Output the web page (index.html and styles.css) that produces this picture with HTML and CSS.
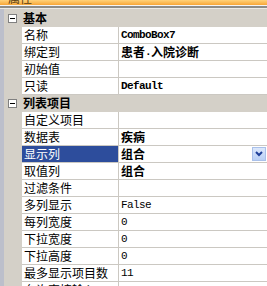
FILE: index.html
```html
<!doctype html>
<html>
<head>
  <title>属性</title>
  <link rel="stylesheet" href="styles.css">
</head>
<body>
  <header class="titlebar"><span>属性</span></header>
  <div class="edge"></div>

  <div class="grid">
    <div class="cat"><span class="toggle"></span>基本</div>
    <div class="row"><div class="gutter"></div><div class="name">名称</div><div class="value bold mono">ComboBox7</div></div>
    <div class="row"><div class="gutter"></div><div class="name">绑定到</div><div class="value bold">患者<span class="mono">.</span>入院诊断</div></div>
    <div class="row"><div class="gutter"></div><div class="name">初始值</div><div class="value"></div></div>
    <div class="row"><div class="gutter"></div><div class="name">只读</div><div class="value bold mono">Default</div></div>

    <div class="cat"><span class="toggle"></span>列表项目</div>
    <div class="row"><div class="gutter"></div><div class="name">自定义项目</div><div class="value"></div></div>
    <div class="row"><div class="gutter"></div><div class="name">数据表</div><div class="value bold">疾病</div></div>
    <div class="row selected">
      <div class="gutter"></div><div class="name">显示列</div>
      <div class="value bold">组合
        <span class="drop"><svg width="8" height="6" viewBox="0 0 8 6"><path d="M1 1 L4 4 L7 1" fill="none" stroke="#1f3f99" stroke-width="2"/></svg></span>
      </div>
    </div>
    <div class="row"><div class="gutter"></div><div class="name">取值列</div><div class="value bold">组合</div></div>
    <div class="row"><div class="gutter"></div><div class="name">过滤条件</div><div class="value"></div></div>
    <div class="row"><div class="gutter"></div><div class="name">多列显示</div><div class="value mono">False</div></div>
    <div class="row"><div class="gutter"></div><div class="name">每列宽度</div><div class="value mono">0</div></div>
    <div class="row"><div class="gutter"></div><div class="name">下拉宽度</div><div class="value mono">0</div></div>
    <div class="row"><div class="gutter"></div><div class="name">下拉高度</div><div class="value mono">0</div></div>
    <div class="row"><div class="gutter"></div><div class="name">最多显示项目数</div><div class="value mono">11</div></div>
    <div class="row"><div class="gutter"></div><div class="name">允许直接输入</div><div class="value mono">True</div></div>
  </div>
</body>
</html>
```
FILE: styles.css
```css
body {
  background: #d4d0c8;
  color: #000;
  font-family: "Noto Sans CJK SC", "Liberation Sans", sans-serif;
  font-size: 12px;
  height: 286px;
  margin: 0;
  overflow: hidden;
  position: relative;
}

.titlebar {
  background: linear-gradient(#ffd27a, #f7a637);
  border-bottom: 1px solid #f4f4f4;
  box-shadow: 0 2px 0 #8c8c88, 0 3px 0 #ecebe6;
  height: 5px;
  overflow: hidden;
  padding-left: 8px;
}

.titlebar span {
  color: #5a3c10;
  display: block;
  line-height: 12px;
  margin-top: -8px;
}

.grid {
  margin-top: 4px;
}

.cat {
  align-items: center;
  border-bottom: 1px solid #d4d0c8;
  display: flex;
  font-weight: bold;
  height: 16px;
  line-height: 16px;
}

.toggle {
  background: #fff;
  border: 1px solid #808080;
  box-sizing: border-box;
  height: 9px;
  margin: 0 6px 0 8px;
  position: relative;
  width: 9px;
}

.toggle::after {
  background: #000;
  content: "";
  height: 1px;
  left: 1px;
  position: absolute;
  top: 3px;
  width: 5px;
}

.row {
  display: flex;
  height: 17px;
  line-height: 16px;
}

.gutter {
  width: 22px;
  flex: none;
}

.name {
  background: #fff;
  border-bottom: 1px solid #cbc8c2;
  border-right: 1px solid #cbc8c2;
  flex: none;
  overflow: hidden;
  padding-left: 2px;
  white-space: nowrap;
  width: 94px;
}

.value {
  align-items: center;
  background: #fff;
  border-bottom: 1px solid #cbc8c2;
  display: flex;
  flex: 1;
  padding-left: 2px;
  white-space: nowrap;
}

.selected .name {
  background: #2d4d9c;
  color: #fff;
}

.bold {
  font-weight: bold;
}

.mono {
  font-family: "Liberation Mono", monospace;
  font-size: 11px;
  letter-spacing: -0.6px;
}

.drop {
  align-items: center;
  background: linear-gradient(#dce8fc, #b9cff5);
  border: 1px solid #a9c0ea;
  box-sizing: border-box;
  display: flex;
  height: 14px;
  justify-content: center;
  margin-left: auto;
  margin-right: 1px;
  width: 14px;
}

.edge {
  background: #bcbfcb;
  height: 100%;
  left: 0;
  position: absolute;
  top: 9px;
  width: 4px;
}
```
